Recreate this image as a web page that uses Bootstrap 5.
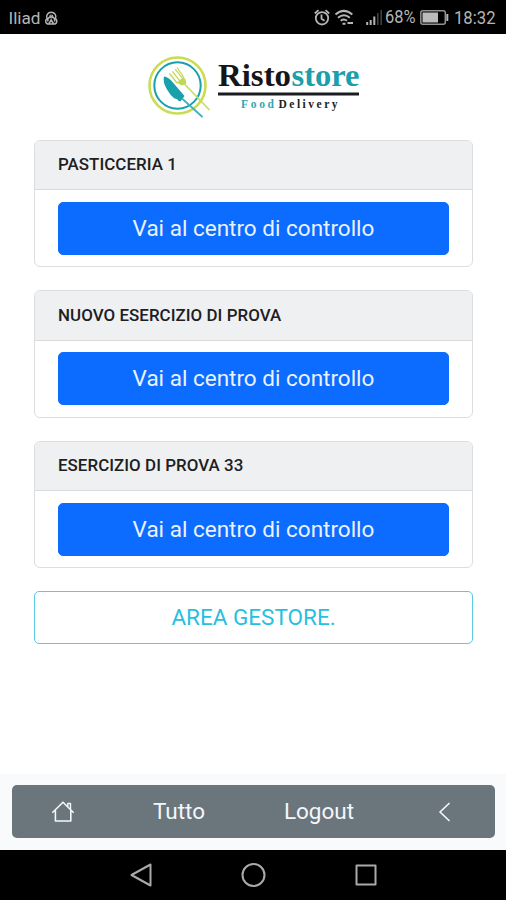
<!DOCTYPE html>
<html lang="it">
<head>
<meta charset="utf-8">
<meta name="viewport" content="width=device-width, initial-scale=1">
<title>Ristostore</title>
<link href="https://cdn.jsdelivr.net/npm/bootstrap@5.3.0/dist/css/bootstrap.min.css" rel="stylesheet">
<style>
  body { font-family: Roboto, "Liberation Sans", sans-serif; height: 900px; overflow: hidden; }
  svg { display: block; flex: none; }
  .phone-status { height: 34px; background: #000; }
  .app-main { padding: 0 33px 0 34px; }
  .brand { height: 105.5px; padding-left: 3px; }
  .shop { border: 1.5px solid #dcddde; border-radius: 6px; height: 127.5px; margin-bottom: 23px; }
  .shop .card-header { height: 49.5px; padding: 0 23px; background: #eff0f1; border-bottom: 1.5px solid #d9dadb; }
  .shop .card-body { padding: 11.5px 23px; }
  .shop-name { font-size: 16.9px; font-weight: 500; letter-spacing: .05px; color: #1d2023; }
  .btn-tall { height: 53px; padding: 0; font-size: 22.5px; line-height: 51px; border-radius: 5px; }
  .btn-primary.btn-tall { --bs-btn-bg: #0b6cff; --bs-btn-border-color: #0b6cff; color: #eaf2ff; }
  .btn-outline-info.btn-tall { --bs-btn-color: #27bfdf; --bs-btn-border-color: #5cc9e2; border-width: 1.5px; }
  .app-foot { height: 76px; padding: 11px 11px 12px 12px; background: #f8fafb; }
  .foot-bar { height: 53px; background: #6b757c; border-radius: 5px; color: #f3f7fc; font-size: 22.5px; }
  .foot-bar a { color: inherit; }
  .w-home { width: 102px; } .w-all { width: 130px; } .w-out { width: 150px; }
  .phone-nav { height: 50px; background: #000; }
</style>
</head>
<body class="d-flex flex-column bg-white">
<header class="phone-status">
  <svg width="506" height="34" viewBox="0 0 506 34" fill="none" stroke="#b5b5b5" font-family="Roboto, sans-serif">
    <g fill="#b5b5b5" stroke="none">
      <text x="8.5" y="24" font-size="17" textLength="32" lengthAdjust="spacingAndGlyphs">Iliad</text>
      <text x="385" y="23" font-size="17.5" textLength="30.5" lengthAdjust="spacingAndGlyphs">68%</text>
      <text x="454" y="24" font-size="18" textLength="41.5" lengthAdjust="spacingAndGlyphs">18:32</text>
    </g>
    <path d="M47 18.500a4.600 4.600 0 1 1 8.500 0a3.200 3.200 0 0 1-.5 5.500h-7.500a3.200 3.200 0 0 1-.5-5.500zM48 21.500a3.500 3.500 0 1 1 6.500 0M49 23.500l2.200-3.500 2.200 3.500" stroke-width="1.500"/>
    <circle cx="51.300" cy="16.500" r="1.500" stroke-width="1.200"/>
    <g stroke-width="1.800">
      <circle cx="322" cy="18.300" r="6.200"/>
      <path d="M321.500 14.500v4.200l3 2M314.800 13.500l3.700-3.300M329.200 13.500l-3.700-3.300"/>
      <path d="M335.500 14.500q8.300-7.200 16.800 0M338 17.700q6-4.800 11.800 0M340.700 20.700q3.200-2.500 6.300 0" stroke-width="2"/>
      <path d="M342.500 23.700h3M347.500 23h5.500" stroke-width="2"/>
    </g>
    <path d="M367.200 25v-3M370.700 25v-5M374.300 25v-8.500" stroke-width="2"/>
    <path d="M377.800 25v-12M381.200 25v-15" stroke="#444" stroke-width="1.500"/>
    <rect x="420.800" y="10.800" width="24.500" height="13.500" rx="2" stroke="#929292" stroke-width="1.500"/>
    <path d="M422.500 12.500h15.500v10h-15.500z" fill="#bbb" stroke="none"/>
    <path d="M447.300 14v7" stroke-width="2"/>
  </svg>
</header>

<main class="app-main flex-grow-1">
  <div class="brand d-flex justify-content-center">
    <svg width="230" height="105" viewBox="140 34 230 105" fill="none" font-family="'Liberation Serif', serif">
      <circle cx="177.500" cy="85.500" r="28" stroke="#c9dc52" stroke-width="2.600"/>
      <circle cx="177.500" cy="85.500" r="23.200" stroke="#18a0ac" stroke-width="2"/>
      <path d="M164 76.500q4.500 0.500 8.500 5.500l12 14-4 5.500-2.500-1-1-1.500-2.500-.5q-4.500-3.500-7.500-9-4.500-7.500-3-13z" fill="#18a0ac"/>
      <path d="M182 98.500l20.500 18.500" stroke="#45aebb" stroke-width="1.800"/>
      <path d="M169.500 73.500l8 10M172.300 71.300l8 10M175.200 69.200l8 10M177 67.500l7 10" stroke="#c3d757" stroke-width="1.300"/>
      <path d="M177 82.500l6.500-5.500q3.500 3.500 2.500 7-4 3-9-1.500z" fill="#c3d757"/>
      <path d="M184 83.500l25.500 26.500" stroke="#c9dc62" stroke-width="1.800"/>
      <text x="218" y="86" font-size="31" font-weight="700" fill="#151619" textLength="73" lengthAdjust="spacingAndGlyphs">Risto</text>
      <text x="291.500" y="86" font-size="31" font-weight="700" fill="#1a9fac" textLength="68" lengthAdjust="spacingAndGlyphs">store</text>
      <path d="M218 94h141" stroke="#1b1c1f" stroke-width="3"/>
      <text x="241" y="108" font-size="11.500" font-weight="700" fill="#35a6b1" textLength="33" lengthAdjust="spacing">Food</text>
      <text x="278.500" y="108" font-size="11.500" font-weight="700" fill="#222" textLength="59" lengthAdjust="spacing">Delivery</text>
    </svg>
  </div>

  <section class="card shop">
    <div class="card-header d-flex align-items-center"><span class="shop-name">PASTICCERIA 1</span></div>
    <div class="card-body"><a href="#" class="btn btn-primary btn-tall w-100">Vai al centro di controllo</a></div>
  </section>
  <section class="card shop">
    <div class="card-header d-flex align-items-center"><span class="shop-name">NUOVO ESERCIZIO DI PROVA</span></div>
    <div class="card-body"><a href="#" class="btn btn-primary btn-tall w-100">Vai al centro di controllo</a></div>
  </section>
  <section class="card shop">
    <div class="card-header d-flex align-items-center"><span class="shop-name">ESERCIZIO DI PROVA 33</span></div>
    <div class="card-body"><a href="#" class="btn btn-primary btn-tall w-100">Vai al centro di controllo</a></div>
  </section>
  <a href="#" class="btn btn-outline-info btn-tall w-100">AREA GESTORE.</a>
</main>

<footer class="app-foot">
  <nav class="foot-bar d-flex align-items-center">
    <a href="#" class="w-home d-flex justify-content-center" aria-label="Home">
      <svg width="24" height="24" viewBox="0 0 24 24" fill="none" stroke="currentColor" stroke-width="1.600" stroke-linejoin="round" stroke-linecap="round">
        <path d="M1.800 12.300L12 2.200l10.200 10.100M4.400 11v10h15.400V11"/>
        <path d="M16.800 6.300V3.500h2.700v5.400" stroke-width="1.400"/>
      </svg>
    </a>
    <a href="#" class="w-all text-center text-decoration-none">Tutto</a>
    <a href="#" class="w-out text-center text-decoration-none">Logout</a>
    <a href="#" class="flex-grow-1 d-flex justify-content-center" aria-label="Indietro">
      <svg width="14" height="22" viewBox="0 0 14 22" fill="none" stroke="currentColor" stroke-width="1.700" stroke-linecap="round" stroke-linejoin="round"><path d="M11 2.500L2 11l9 8.500"/></svg>
    </a>
  </nav>
</footer>
<div class="phone-nav">
  <svg width="506" height="50" viewBox="0 850 506 50" fill="none" stroke="#aaa" stroke-width="2" stroke-linejoin="round">
    <path d="M131.500 875l19-10.500v21z"/>
    <circle cx="253.500" cy="875" r="11"/>
    <path d="M356.500 865.500h19v19h-19z"/>
  </svg>
</div>
<script src="https://cdn.jsdelivr.net/npm/bootstrap@5.3.0/dist/js/bootstrap.bundle.min.js"></script>
</body>
</html>
